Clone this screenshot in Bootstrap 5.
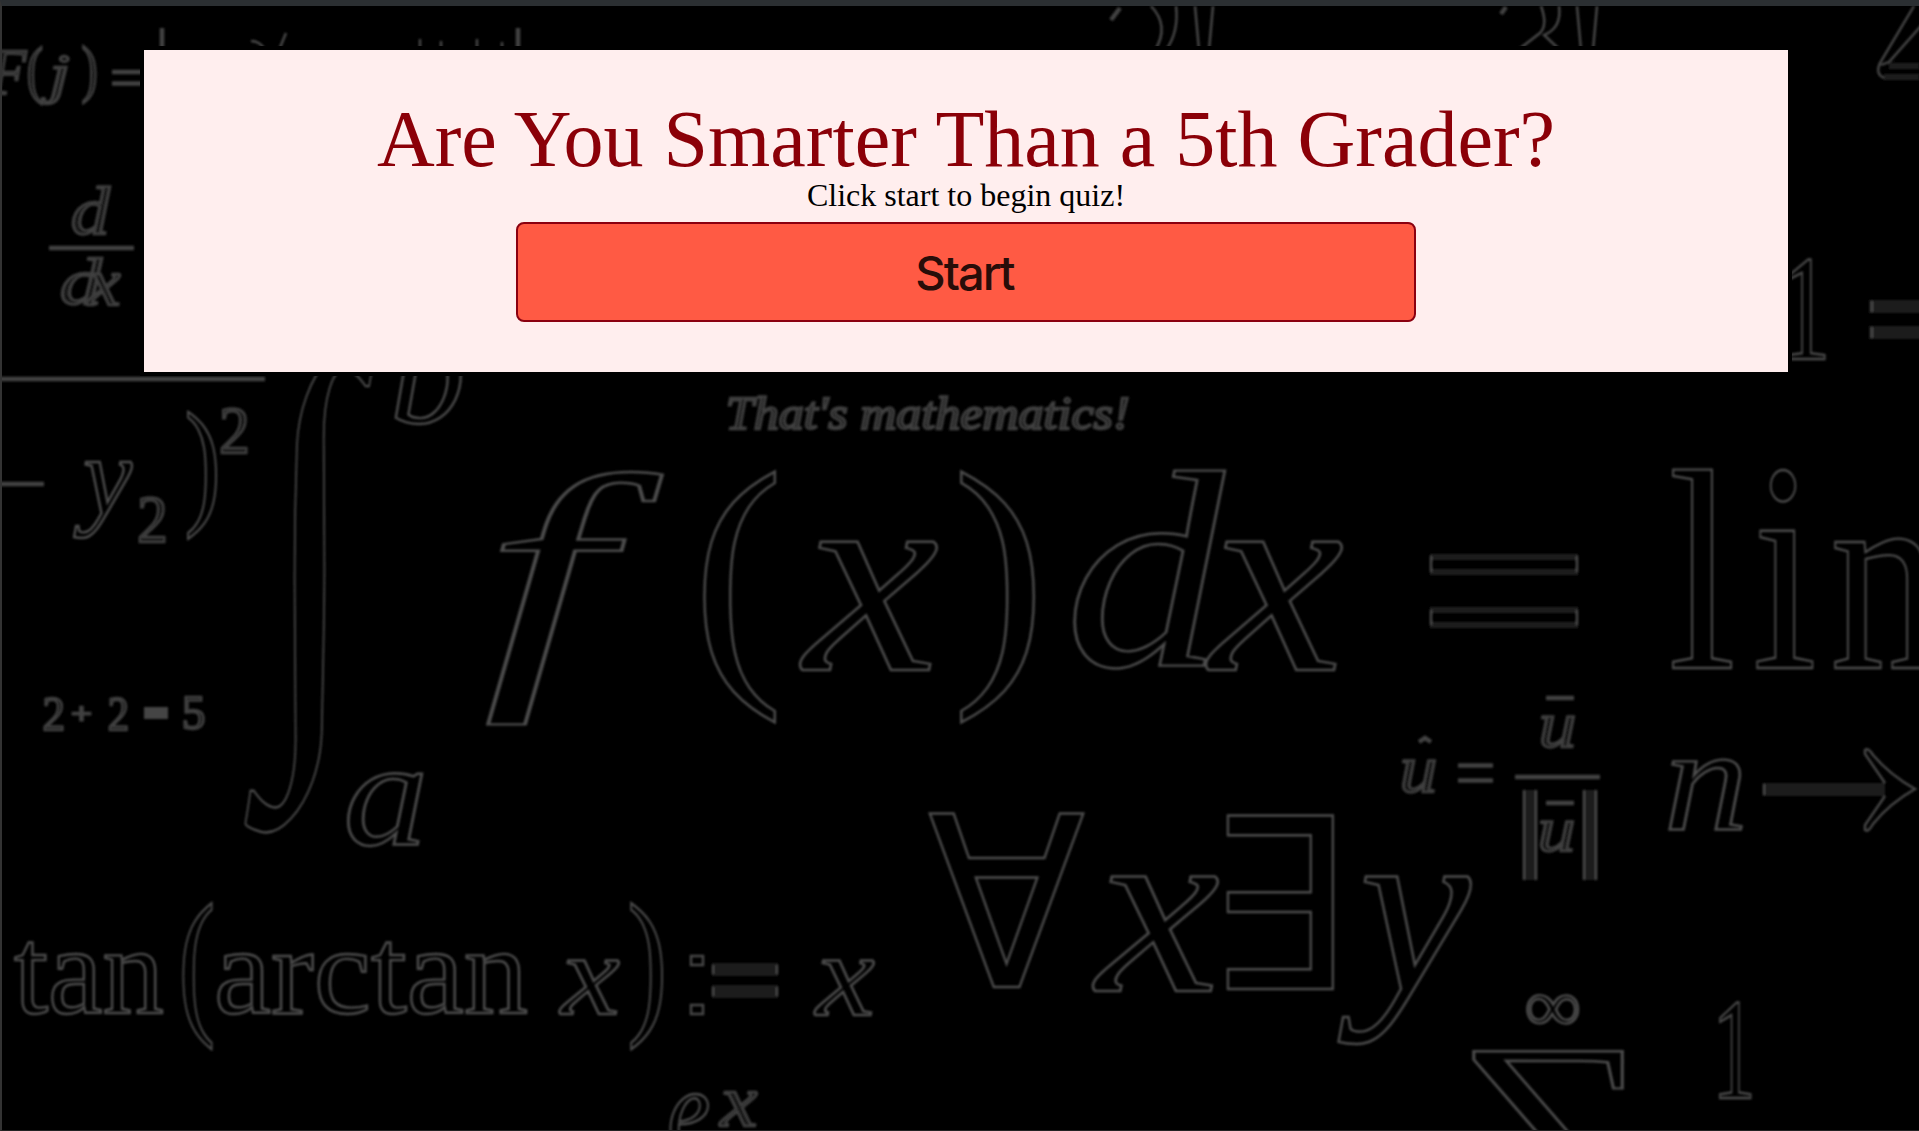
<!DOCTYPE html>
<html lang="en">
<head>
<meta charset="utf-8">
<meta name="viewport" content="width=device-width, initial-scale=1">
<title>Are You Smarter Than a 5th Grader?</title>
<link href="https://cdn.jsdelivr.net/npm/bootstrap@5.3.0/dist/css/bootstrap.min.css" rel="stylesheet">
<style>
  body { background: #000; font-family: "Liberation Serif", "Times New Roman", serif; color: #000; }
  .page-shell { height: 1131px; border-top: 6px solid #2b2f32; border-left: 2px solid #333; border-bottom: 1px solid #222; }
  .chalkboard { position: absolute; top: 0; left: 0; width: 1919px; height: 1131px; z-index: 0; }
  .chalkboard text { font-family: "Liberation Serif", serif; fill: none; stroke: #4e4e4e; stroke-width: 2.4; }
  .chalkboard .it { font-style: italic; }
  .chalkboard .tiny { stroke: #404040; fill: #161616; stroke-width: 2.4; }
  .chalkboard .edge { fill: none; stroke: #4a4a4a; stroke-width: 2.4; }
  .chalkboard .rule { fill: none; stroke: #424242; stroke-width: 4.5; }
  .chalkboard .slab { fill: #1b1b1b; stroke: none; }
  .chalkboard .soft { fill: none; stroke: #1d1d1d; stroke-width: 7; }
  .quiz-panel { z-index: 1; width: 1652px; height: 330px; margin: 40px 0 0 138px; border: 4px solid #000; background: #ffeeee; }
  .quiz-title { font-size: 80px; line-height: 92px; color: #8b0008; margin-top: 43px; }
  .quiz-hint { font-size: 32px; line-height: 36px; margin-top: -8px; }
  .btn-start { width: 900px; height: 100px; margin-top: 9px; border: 2px solid #8b0010; border-radius: 8px; background: #ff5a44; color: #280d09; font: 500 47px/1 Inter, sans-serif; letter-spacing: -2px; padding: 1px 3px 0 0; }
  .btn-start:hover { background: #ff5a44; color: #280d09; border-color: #8b0010; }
</style>
<script src="https://cdn.jsdelivr.net/npm/bootstrap@5.3.0/dist/js/bootstrap.bundle.min.js"></script>
</head>
<body>
<div class="page-shell position-relative overflow-hidden">
  <main class="quiz-panel position-relative d-flex flex-column align-items-center text-center">
    <h1 class="quiz-title mb-0 fw-normal text-nowrap">Are You Smarter Than a 5th Grader?</h1>
    <p class="quiz-hint mb-0">Click start to begin quiz!</p>
    <button type="button" class="btn btn-start">Start</button>
  </main>
</div>
<svg class="chalkboard" viewBox="0 0 1919 1131" aria-hidden="true">
  <defs>
    <filter id="chalk" x="0" y="0" width="1919" height="1131" filterUnits="userSpaceOnUse"><feGaussianBlur stdDeviation="0.9"/></filter>
    <clipPath id="board"><path clip-rule="evenodd" d="M2 6H1919V1130H2ZM140 46V376H1792V46Z"/></clipPath>
  </defs>
  <g clip-path="url(#board)"><g filter="url(#chalk)">
    <!-- data-ink: left, top, right, bottom of the drawn symbol -->
    <text class="it tiny" data-ink="-12,51,27,94">F</text>
    <text class="tiny" data-ink="28,46,42,105">(</text>
    <text class="it tiny" data-ink="41,55,69,104">j</text>
    <text class="tiny" data-ink="83,46,96,104">)</text>
    <path class="rule" d="M112 72H150M112 83.500H150"/>
    <path class="rule" d="M162 28V60M518 28V60"/>
    <path class="edge" d="M251 41Q260 41 265 50M279 50L286 33M420 39V50M441 41V50M477 39V50M502 42V50"/>
    <path class="rule" d="M1111 20L1120 8"/>
    <path class="edge" d="M1151 6Q1170 26 1155 50M1176 6Q1179 32 1166 50M1195 6L1199 50M1213 6L1209 50"/>
    <path class="rule" d="M1501 14L1506 7"/>
    <path class="edge" d="M1541 6Q1548 25 1540 33L1518 50M1559 6Q1562 28 1544 35L1560 50M1577 6L1581 50M1597 6L1593 50"/>
    <path class="edge" d="M1914 6L1880 63Q1875 74 1884 78M1928 18L1889 62L1881 65"/>
    <path class="soft" d="M1889 66H1919M1884 77H1919"/>
    <text class="it tiny" data-ink="72,187,111,235">d</text>
    <path class="rule" d="M49 248H134"/>
    <text class="it tiny" data-ink="61,258,103,305">d</text>
    <text class="it tiny" data-ink="86,273,120,305">x</text>
    <text data-ink="1787,258,1826,359">1</text>
    <rect class="slab" x="1869" y="300" width="55" height="13"/><rect class="slab" x="1869" y="326" width="55" height="13"/>
    <path class="edge" d="M1872 301V312M1872 327V338"/>

    <path class="rule" d="M0 379H265M0 484H44"/>
    <text class="it" data-ink="73,461,133,538">y</text>
    <text class="tiny" data-ink="139,497,165,542">2</text>
    <text data-ink="188,411,217,540">)</text>
    <text class="tiny" data-ink="221,408,247,453">2</text>
    <text data-ink="242,342,376,839">∫</text>
    <text class="it" data-ink="395,315,463,425">b</text>
    <text class="it" data-ink="346,771,423,846">a</text>
    <text class="tiny" data-ink="44,697,63,730">2</text>
    <text class="tiny" data-ink="73,706,90,720">+</text>
    <text class="tiny" data-ink="109,697,127,730">2</text>
    <path d="M144 713H168" stroke="#444" stroke-width="12"/>
    <text class="tiny" data-ink="184,697,204,730">5</text>

    <text class="it tiny" data-ink="729,397,1128,430">That's mathematics!</text>
    <text class="it" data-ink="483,468,668,726">f</text>
    <text data-ink="701,469,778,724">(</text>
    <text class="it" data-ink="799,539,937,670">x</text>
    <text data-ink="961,469,1036,724">)</text>
    <text class="it" data-ink="1070,468,1229,670">d</text>
    <text class="it" data-ink="1205,539,1342,670">x</text>
    <path class="soft" d="M1430 557H1578M1430 572H1578M1430 610H1578M1430 625H1578"/>
    <path class="edge" d="M1431 556V572M1577 556V572M1431 610V625M1577 610V625"/>
    <text data-ink="1672,467,1733,668">l</text>
    <text data-ink="1756,467,1814,668">i</text>
    <text data-ink="1834,535,1998,668">m</text>

    <text class="it tiny" data-ink="1403,760,1435,793">u</text>
    <path class="rule" d="M1419 742L1425 738L1431 742"/>
    <path class="rule" d="M1458 765.500H1493M1458 780.500H1493M1515 777H1600"/>
    <text class="it tiny" data-ink="1542,716,1574,748">u</text>
    <path class="rule" d="M1546 698H1574M1546 803H1574"/>
    <text class="it tiny" data-ink="1541,821,1573,852">u</text>
    <rect class="slab" x="1523" y="790" width="14" height="90"/><rect class="slab" x="1583" y="790" width="14" height="90"/>
    <path class="edge" d="M1524 790V880M1536 790V880M1584 790V880M1596 790V880"/>
    <text class="it" data-ink="1669,758,1743,830">n</text>
    <path class="slab" d="M1763 783H1885V796H1763Z"/>
    <path class="edge" d="M1885 783L1865 754V750Q1868 747 1873 755Q1890 775 1915 789Q1890 803 1873 824Q1868 833 1865 830V825L1885 796M1764 784V795"/>

    <text data-ink="14,941,164,1015">tan</text>
    <text data-ink="182,902,213,1050">(</text>
    <text data-ink="218,941,528,1015">arctan</text>
    <text class="it" data-ink="559,959,619,1014">x</text>
    <text data-ink="631,902,663,1050">)</text>
    <path class="edge" d="M691 956H703V965H691ZM691 1005H703V1014H691Z"/>
    <rect class="slab" x="712" y="963" width="66" height="13"/><rect class="slab" x="712" y="985" width="66" height="13"/>
    <path class="edge" d="M713 965V974M777 965V974M713 987V996M777 987V996"/>
    <text class="it" data-ink="814,959,874,1015">x</text>
    <text data-ink="928,812,1086,987">∀</text>
    <text class="it" data-ink="1092,874,1218,991">x</text>
    <text data-ink="1227,814,1336,989">∃</text>
    <text class="it" data-ink="1336,873,1473,1044">y</text>
    <text data-ink="1527,995,1579,1024">∞</text>
    <text data-ink="1464,1051,1636,1240">∑</text>
    <text data-ink="1719,1001,1752,1098">1</text>
    <text class="it" data-ink="669,1093,708,1150">e</text>
    <text class="it tiny" data-ink="719,1091,757,1126">x</text>
  </g></g>
</svg>
<script>
  // Size each chalk symbol so that its ink fills the box in data-ink.
  const pen = document.createElement('canvas').getContext('2d');
  document.querySelectorAll('[data-ink]').forEach(t => {
    const [l, top, r, b] = t.dataset.ink.split(',').map(Number);
    const style = getComputedStyle(t);
    pen.font = `${style.fontStyle} 400px ${style.fontFamily}`;
    const m = pen.measureText(t.textContent);
    const size = 400 * (b - top) / (m.actualBoundingBoxAscent + m.actualBoundingBoxDescent);
    const k = size / 400;
    const sx = (r - l) / (k * (m.actualBoundingBoxLeft + m.actualBoundingBoxRight));
    t.style.fontSize = size + 'px';
    t.setAttribute('transform', `translate(${l + m.actualBoundingBoxLeft * k * sx} ${b - m.actualBoundingBoxDescent * k}) scale(${sx} 1)`);
  });
</script>
</body>
</html>
